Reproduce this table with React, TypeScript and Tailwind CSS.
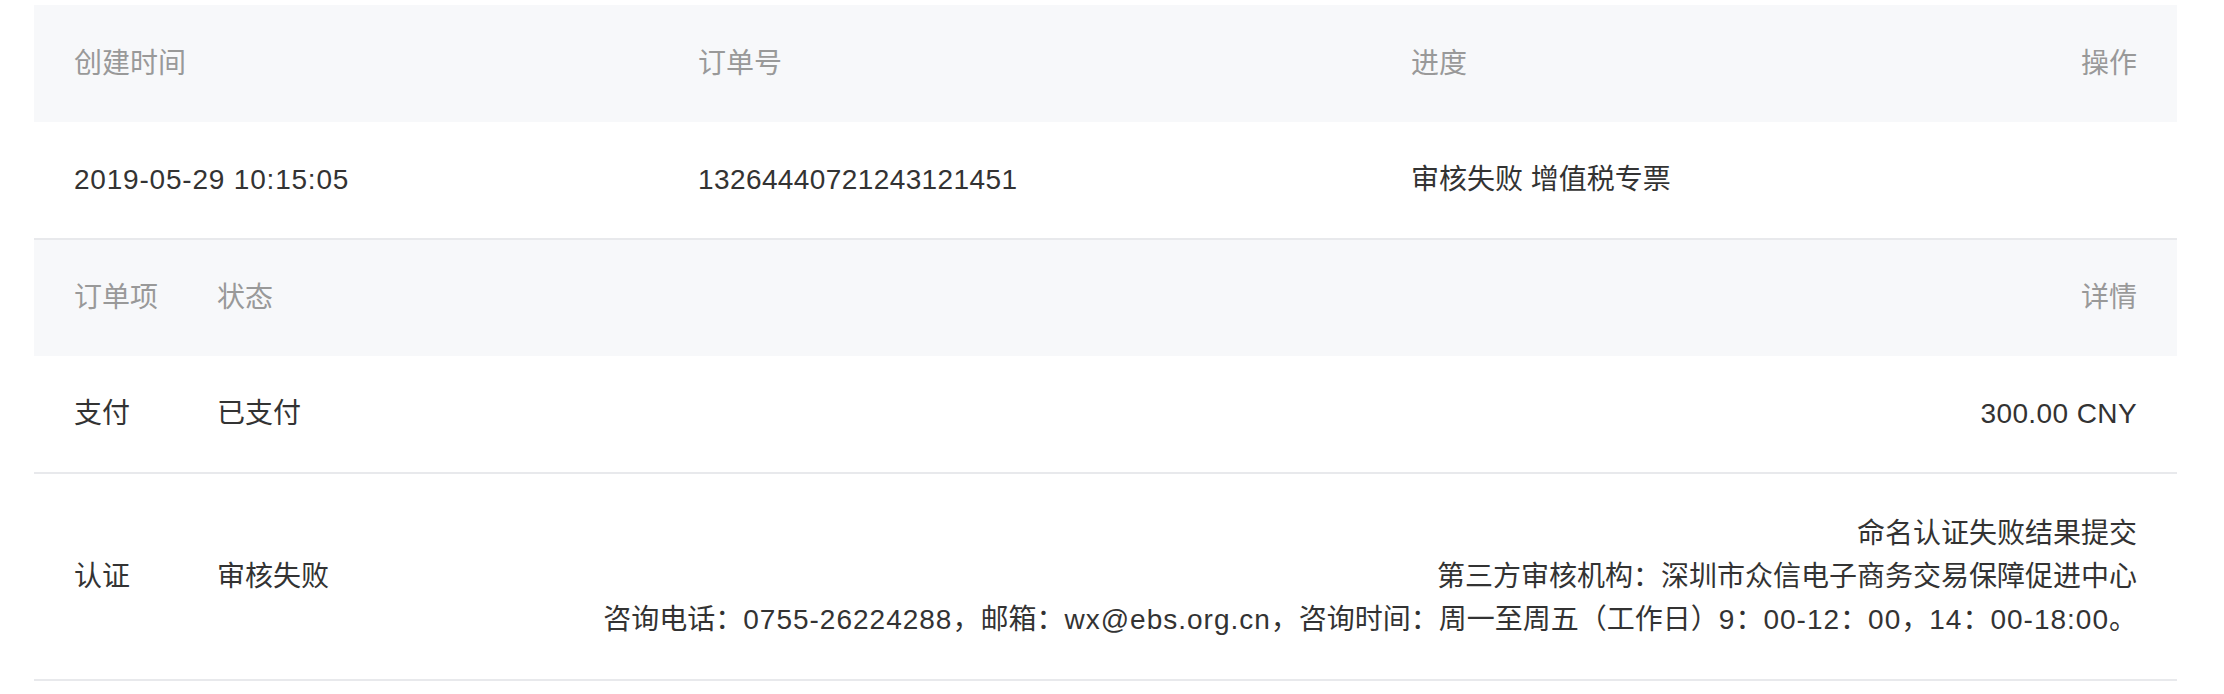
import React from "react";

const font = {
  fontFamily: '"Liberation Sans", "Noto Sans CJK SC", sans-serif',
};

function L({ children }: { children: React.ReactNode }) {
  return <span className="tracking-[1px]">{children}</span>;
}

export default function App() {
  return (
    <div
      className="w-[2224px] h-[694px] bg-white pt-[5px] text-[28px] leading-[42px] text-[#333]"
      style={font}
    >
      <div className="mx-[34px] w-[2143px]">
        {/* Table 1 header */}
        <div className="flex h-[117px] items-center bg-[#f7f8fa] px-10 text-[#999]">
          <div className="w-[624px]">创建时间</div>
          <div className="w-[713px]">订单号</div>
          <div className="flex-1">进度</div>
          <div>操作</div>
        </div>
        {/* Table 1 row */}
        <div className="flex h-[118px] items-center border-b-2 border-[#e8e9ec] px-10">
          <div className="w-[624px] tracking-[0.8px]">2019-05-29 10:15:05</div>
          <div className="w-[713px] tracking-[0.4px]">13264440721243121451</div>
          <div className="flex-1">审核失败 增值税专票</div>
          <div></div>
        </div>
        {/* Table 2 header */}
        <div className="flex h-[116px] items-center bg-[#f7f8fa] px-10 text-[#999]">
          <div className="w-[143px]">订单项</div>
          <div className="flex-1">状态</div>
          <div>详情</div>
        </div>
        <div className="flex h-[118px] items-center border-b-2 border-[#e8e9ec] px-10">
          <div className="w-[143px]">支付</div>
          <div className="flex-1">已支付</div>
          <div className="tracking-[0.4px]">300.00 CNY</div>
        </div>
        <div className="flex h-[207px] items-center border-b-2 border-[#e8e9ec] px-10">
          <div className="w-[143px]">认证</div>
          <div className="w-[200px]">审核失败</div>
          <div className="flex-1 text-right leading-[43px]">
            <div>命名认证失败结果提交</div>
            <div>第三方审核机构：深圳市众信电子商务交易保障促进中心</div>
            <div>
              咨询电话：<L>0755-26224288</L>，邮箱：<L>wx@ebs.org.cn</L>，咨询时间：周一至周五（工作日）<L>9</L>：<L>00-12</L>：<L>00</L>，<L>14</L>：<L>00-18:00</L>。
            </div>
          </div>
        </div>
      </div>
    </div>
  );
}
